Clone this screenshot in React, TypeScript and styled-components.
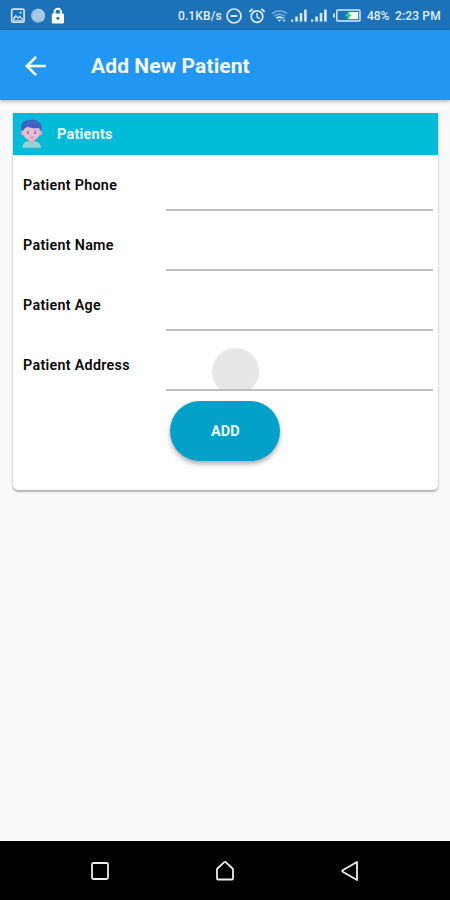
import React from 'react';
import styled, { createGlobalStyle } from 'styled-components';

const GlobalStyle = createGlobalStyle`
  * { box-sizing: border-box; }
  html, body { margin: 0; padding: 0; }
  body { font-family: Roboto, "Liberation Sans", sans-serif; background: #fafafa; }
`;

const Screen = styled.div`
  width: 450px;
  height: 900px;
  display: flex;
  flex-direction: column;
  background: #fafafa;
  overflow: hidden;
`;

const StatusBar = styled.div`
  flex: none;
  height: 30px;
  padding: 2px 0 0 10px;
  display: flex;
  justify-content: space-between;
  align-items: center;
  background: #1b72b9;
  color: #e3f0fb;
`;

const Notifications = styled.div`
  display: grid;
  grid-template-columns: 20px 20px 16px;
  align-items: center;
`;

const SystemStatus = styled.div`
  display: grid;
  grid-template-columns: 48px 22px 23px 19px 20px 22px 35px 28px 55px;
  align-items: center;
`;

const StatusText = styled.span<{ $spacing?: number }>`
  font-size: 12px;
  line-height: 16px;
  font-weight: 500;
  letter-spacing: ${({ $spacing = 0 }) => $spacing}px;
  white-space: nowrap;
`;

const Icon = styled.svg`
  display: block;
  overflow: visible;
`;

const AppBar = styled.header`
  flex: none;
  height: 70px;
  padding: 1px 0 0 25px;
  display: flex;
  align-items: center;
  gap: 44px;
  background: #2196f3;
  box-shadow: 0 1px 4px rgba(0, 0, 0, 0.35);
`;

const IconButton = styled.button`
  border: 0;
  padding: 0;
  background: none;
  color: #fff;
`;

const Title = styled.h1`
  margin: 0;
  color: #f3faff;
  font-size: 21px;
  line-height: 26px;
  font-weight: 700;
  letter-spacing: 0.1px;
`;

const Content = styled.main`
  flex: 1;
  padding: 13px 12px 0 13px;
`;

const Card = styled.section`
  height: 377px;
  border-radius: 1px 1px 5px 5px;
  background: #fff;
  box-shadow: 0 2px 2px rgba(0, 0, 0, 0.2), 0 1px 3px rgba(0, 0, 0, 0.2);
`;

const CardHeader = styled.div`
  height: 42px;
  padding-left: 7px;
  display: flex;
  align-items: center;
  gap: 13px;
  background: #00bcd7;
`;

const CardTitle = styled.h2`
  margin: 0;
  padding-top: 1px;
  color: #e9fbff;
  font-size: 14.5px;
  line-height: 21px;
  font-weight: 700;
  letter-spacing: 0.2px;
`;

const Form = styled.form`
  display: flex;
  flex-direction: column;
`;

const Field = styled.label`
  height: 60px;
  padding: 0 5px 0 10px;
  display: grid;
  grid-template-columns: 143px 1fr;
`;

const FieldName = styled.span`
  padding-top: 21px;
  font-size: 14.3px;
  line-height: 19px;
  font-weight: 600;
  letter-spacing: 0.3px;
  color: #080808;
`;

const FieldBox = styled.span`
  height: 56px;
  position: relative;
  overflow: hidden;
  border-bottom: 2px solid #c0c0c0;
`;

const Input = styled.input`
  width: 100%;
  height: 100%;
  border: 0;
  outline: 0;
  background: transparent;
  font: inherit;
`;

const TouchSpot = styled.span`
  position: absolute;
  left: 46px;
  top: 13px;
  width: 47px;
  height: 47px;
  border-radius: 50%;
  background: #e7e7e7;
`;

const AddButton = styled.button`
  width: 110px;
  height: 60px;
  margin: 6px 0 0 157.4px;
  padding: 0;
  border: 0;
  border-radius: 30px;
  background: #03a1c9;
  color: #eafaff;
  font-family: inherit;
  font-size: 14.5px;
  font-weight: 700;
  box-shadow: 0 3px 5px rgba(0, 0, 0, 0.32);
`;

const NavBar = styled.nav`
  flex: none;
  height: 59px;
  padding-top: 1px;
  display: grid;
  grid-template-columns: 125px 125px 125px;
  justify-content: center;
  align-items: center;
  justify-items: center;
  background: #000;
`;

const PictureIcon = () => (
  <Icon width="16" height="16" viewBox="0 0 16 16" fill="none" stroke="#cfe4f6">
    <rect x="1.7" y="1.2" width="12.4" height="13" rx="1.5" strokeWidth="1.7" />
    <path d="M3 10.2 5.8 6.7 8 9.3l1.8-1.8 3 3.2v2H3z" fill="#cfe4f6" stroke="none" />
    <path d="M4 11.8h8l-2-2.2-2 1.4-1.9-2z" fill="#1b5f9f" stroke="none" />
    <circle cx="10.7" cy="4.7" r="1.1" fill="#cfe4f6" stroke="none" />
  </Icon>
);

const BallIcon = () => (
  <Icon width="16" height="16" viewBox="0 0 16 16">
    <circle cx="8" cy="7.7" r="7" fill="#8fbfe6" />
    <circle cx="7.5" cy="8" r="5" fill="#abc8df" />
    <path d="M7 1.2a6.8 6.8 0 0 1 5 11.7" fill="none" stroke="#c4e2f8" strokeWidth="1.1" />
  </Icon>
);

const LockIcon = () => (
  <Icon width="16" height="16" viewBox="0 0 16 16">
    <path d="M4.6 7V4a3.2 3.2 0 0 1 6.4 0v3" fill="none" stroke="#fff" strokeWidth="1.9" />
    <rect x="1.8" y="5.6" width="12.2" height="9.9" rx="1.2" fill="#fff" />
    <circle cx="7.9" cy="10.3" r="1.4" fill="#1b5f9f" />
  </Icon>
);

const DoNotDisturbIcon = () => (
  <Icon width="16" height="16" viewBox="0 0 16 16" fill="none" stroke="#d9eaf8" strokeWidth="1.7">
    <circle cx="8" cy="8" r="7" />
    <path d="M4.7 8h6.6" strokeWidth="2" />
  </Icon>
);

const AlarmIcon = () => (
  <Icon width="17" height="16" viewBox="0 0 17 16" fill="none" stroke="#d9eaf8" strokeWidth="1.8">
    <circle cx="9" cy="8.6" r="5.8" />
    <path d="M1.3 3.8 4.7 1M16.7 3.8 13.3 1" />
    <path d="M9 5v4l2.8 1.7" strokeWidth="1.4" />
  </Icon>
);

const WifiIcon = () => (
  <Icon width="17" height="16" viewBox="0 0 17 16" fill="none">
    <path d="M1 5.5q7.5-5.5 15 0M3.2 8.2q5.3-3.8 10.6 0" stroke="#76aeda" strokeWidth="1.6" />
    <path d="M5.3 10.2q3.2-2.1 6.4 0" stroke="#d9eaf8" strokeWidth="1.7" />
    <path d="m6.8 11.7 1.7 2 1.7-2z" fill="#fff" />
    <path d="M13 9.3v4m-1.5-1.4 1.5 1.6 1.5-1.6" stroke="#a9cfea" strokeWidth="1" />
  </Icon>
);

const SignalIcon = () => (
  <Icon width="17" height="16" viewBox="0 0 17 16" fill="#d9eaf8">
    <rect x="1" y="11.6" width="2.3" height="2" />
    <rect x="5.3" y="8.5" width="2.5" height="5.1" />
    <rect x="9.7" y="5" width="2.6" height="8.6" />
    <rect x="14.1" y="1.6" width="2.6" height="12" />
  </Icon>
);

const BatteryIcon = () => (
  <Icon width="29" height="16" viewBox="0 0 29 16">
    <rect x="1" y="5.2" width="2" height="4.6" rx=".8" fill="#bddaf0" />
    <rect x="4.8" y="2.1" width="23.2" height="11" rx="1" fill="none" stroke="#d9eaf8" strokeWidth="1.5" />
    <rect x="16.5" y="4" width="9.7" height="7.2" fill="#fff" />
    <path d="m17.2 3.6-4.4 4.3h3l-.8 3.6 4.2-4.6h-2.8z" fill="#2fcc70" stroke="#2fcc70" strokeWidth=".8" />
  </Icon>
);

const BackArrow = () => (
  <Icon width="22" height="22" viewBox="0 0 22 22" fill="none" stroke="#fff" strokeWidth="2.6">
    <path d="M20.8 11H2.5M11 1.8 1.9 11l9.1 9.2" />
  </Icon>
);

const PatientAvatar = () => (
  <Icon width="24" height="30" viewBox="0 0 24 30">
    <path d="M2.2 28.8c.3-5 3.2-6.8 9.4-6.8s9 2 9.4 6.8z" fill="#91d5d2" />
    <path d="M8.6 19h6.2v3.7c-1 2.7-5.2 2.7-6.2 0z" fill="#d9a9bf" />
    <path d="M2.2 28.8h18.8" stroke="#b49fc5" strokeWidth=".8" />
    <ellipse cx="2.8" cy="14" rx="1.8" ry="2.4" fill="#efa8bb" />
    <ellipse cx="20.2" cy="14" rx="1.8" ry="2.4" fill="#efa8bb" />
    <path d="M3.3 8h16.4v6.5c0 4-4.6 7-8.2 7s-8.2-3-8.2-7z" fill="#e6bdd2" />
    <path d="M1.5 10.5C-.5 5 4 .6 9.4 1.2c3-1.5 8-.3 9.8 2.2 3 1.6 2.6 5.7 1.8 8-.9.2-1.5-.8-1.9-2.4-5.4.9-9.4-.3-11.6-1.5-1.4 1.4-3.3 1.8-4.4 4.3z" fill="#3f61c3" />
    <path d="M5 5.8c4.5-2 9.8-1.8 14 .4M8 3.4c3.5-.9 6.4-.6 9 .5" fill="none" stroke="#5169ca" strokeWidth=".8" />
    <path d="M6.4 12h3m4.4 0h3" stroke="#9c83b6" strokeWidth=".8" />
    <circle cx="8" cy="14" r="1.1" fill="#7460a6" />
    <circle cx="15.2" cy="14" r="1.1" fill="#7460a6" />
    <path d="M10 18q1.6 1 3.2 0" fill="none" stroke="#c16b91" strokeWidth="1" />
  </Icon>
);

const fields = [
  { name: 'Patient Phone' },
  { name: 'Patient Name' },
  { name: 'Patient Age' },
  { name: 'Patient Address', touched: true },
];

export default function App() {
  return (
    <Screen>
      <GlobalStyle />
      <StatusBar>
        <Notifications>
          <PictureIcon />
          <BallIcon />
          <LockIcon />
        </Notifications>
        <SystemStatus>
          <StatusText $spacing={0.1}>0.1KB/s</StatusText>
          <DoNotDisturbIcon />
          <AlarmIcon />
          <WifiIcon />
          <SignalIcon />
          <SignalIcon />
          <BatteryIcon />
          <StatusText $spacing={-0.1}>48%</StatusText>
          <StatusText $spacing={0.15}>2:23 PM</StatusText>
        </SystemStatus>
      </StatusBar>
      <AppBar>
        <IconButton aria-label="Back">
          <BackArrow />
        </IconButton>
        <Title>Add New Patient</Title>
      </AppBar>
      <Content>
        <Card>
          <CardHeader>
            <PatientAvatar />
            <CardTitle>Patients</CardTitle>
          </CardHeader>
          <Form>
            {fields.map(({ name, touched }) => (
              <Field key={name}>
                <FieldName>{name}</FieldName>
                <FieldBox>
                  {touched && <TouchSpot />}
                  <Input />
                </FieldBox>
              </Field>
            ))}
            <AddButton type="button">ADD</AddButton>
          </Form>
        </Card>
      </Content>
      <NavBar>
        <Icon width="18" height="18" viewBox="0 0 18 18" fill="none" stroke="#eee" strokeWidth="1.8">
          <rect x="1" y="1" width="16" height="16" rx="1.5" />
        </Icon>
        <Icon width="18" height="20" viewBox="0 0 18 20" fill="none" stroke="#eee" strokeWidth="1.8" strokeLinejoin="round">
          <path d="M1 8 8 1.3q1-.8 2 0L17 8v9.5q0 1-1 1H2q-1 0-1-1z" />
        </Icon>
        <Icon width="18" height="20" viewBox="0 0 18 20" fill="none" stroke="#eee" strokeWidth="1.8" strokeLinejoin="round">
          <path d="M16 1v18L1.7 10.7q-1-.7 0-1.4z" />
        </Icon>
      </NavBar>
    </Screen>
  );
}
